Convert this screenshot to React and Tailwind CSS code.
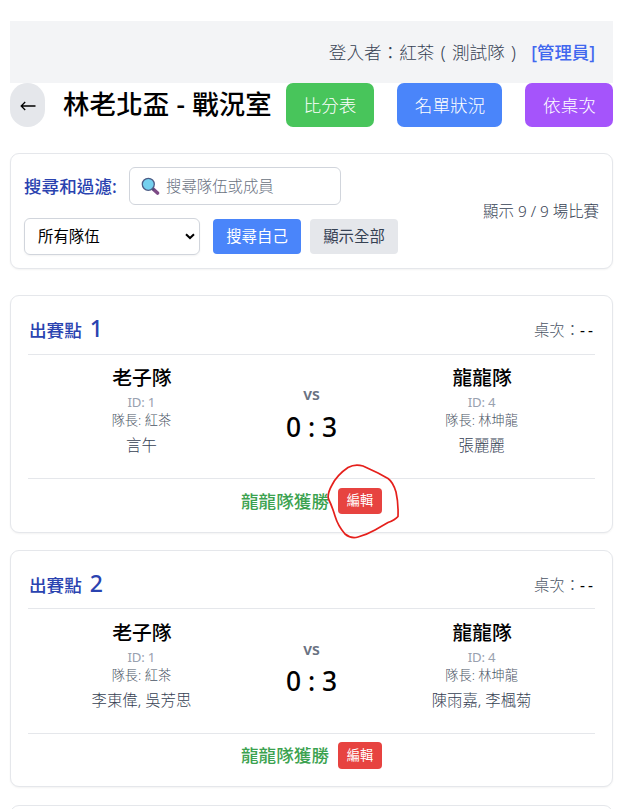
const matches = [
  {
    no: 1,
    a: { name: '老子隊', id: 1, captain: '紅茶', members: '言午' },
    b: { name: '龍龍隊', id: 4, captain: '林坤龍', members: '張麗麗' },
    card: 'h-[238px] mt-[26px]',
    head: 'h-[59px]',
    body: 'h-[124px]',
    teams: 'pt-[9px]',
    versus: 'pt-[27px]',
    score: 'mt-[5px]',
    foot: 'pt-[9px]',
    edit: 'h-[26px]',
    circled: true,
  },
  {
    no: 2,
    a: { name: '老子隊', id: 1, captain: '紅茶', members: '李東偉, 吳芳思' },
    b: { name: '龍龍隊', id: 4, captain: '林坤龍', members: '陳雨嘉, 李楓菊' },
    card: 'h-[237px] mt-[17px]',
    head: 'h-[58px]',
    body: 'h-[125px]',
    teams: 'pt-[10px]',
    versus: 'pt-[28px]',
    score: 'mt-[4px]',
    foot: 'pt-[8px]',
    edit: 'h-[27px]',
  },
];

function Magnifier() {
  return (
    <svg className="h-[19px] w-[19px] shrink-0" viewBox="0 0 19 19">
      <path d="M11.5 11.5 L16.5 16" stroke="#7d4a86" strokeWidth="3.6" strokeLinecap="round" />
      <path d="M10.5 11 L13 13" stroke="#4a4a72" strokeWidth="2.2" />
      <circle cx="7.3" cy="7.3" r="6" fill="#74d0ee" stroke="#4c5c86" strokeWidth="1.3" />
    </svg>
  );
}

function Team({ team, pad }) {
  return (
    <div className={`col-span-2 flex flex-col items-center whitespace-nowrap ${pad}`}>
      <div className="h-7 pl-px text-[19.8px] leading-7 font-medium text-black">{team.name}</div>
      <div className="mt-px h-[18px] text-[13.2px] leading-[18px] tracking-[-0.2px] text-gray-400">ID: {team.id}</div>
      <div className="h-[18px] text-[13.2px] leading-[18px] font-light text-gray-600">隊長: {team.captain}</div>
      <div className="mt-[6px] h-[22px] text-[15.4px] leading-[22px] font-light text-gray-700">{team.members}</div>
    </div>
  );
}

function Circle() {
  return (
    <svg className="pointer-events-none absolute -top-[25px] -left-[13px] h-[78px] w-[76px]" viewBox="325 463 76 78" fill="none">
      <path
        d="M332 485 Q337 475 348 467.500 Q355 463.500 363 466 L378 473 L388 478.500 Q393 482 396 492 Q398.500 503 398 516.500 Q395 520 388 522.500 L375 530 Q366 535 358 537 Q351 539 345 534 Q338 526 335 516 Q332 506 328.500 499 Q327 494 332 485 Z"
        stroke="#e5201c"
        strokeWidth="1.700"
        strokeLinejoin="round"
      />
    </svg>
  );
}

function MatchCard({ m }) {
  return (
    <section className={`shrink-0 rounded-[9px] border border-gray-200 bg-white px-[17px] shadow-xs ${m.card}`}>
      <div className={`flex justify-between border-b border-gray-200 ${m.head}`}>
        <div className="flex items-baseline pt-[16px] pl-[1px] leading-[32px] font-medium text-[#2a43b0]">
          <span className="text-[17.6px]">出賽點</span>
          <span className="ml-[8px] text-[23px]">{m.no}</span>
        </div>
        <div className="flex pt-[24px] text-[15.4px] leading-[22px] font-light text-gray-600">
          桌次：<span className="-mr-[1px] font-normal tracking-[3px] text-black">--</span>
        </div>
      </div>
      <div className={`grid grid-cols-5 border-b border-gray-200 ${m.body}`}>
        <Team team={m.a} pad={m.teams} />
        <div className={`flex flex-col items-center whitespace-nowrap ${m.versus}`}>
          <div className="h-6 text-[16px] leading-6 font-semibold text-gray-500">vs</div>
          <div className={`text-[26.4px] leading-8 font-medium text-black ${m.score}`}>0 : 3</div>
        </div>
        <Team team={m.b} pad={m.teams} />
      </div>
      <div className={`flex justify-center gap-[9px] ${m.foot}`}>
        <span className="text-[17.6px] leading-[27px] font-medium text-[#3ba24f]">龍龍隊獲勝</span>
        <div className="relative">
          <button className={`flex w-[44px] items-center justify-center rounded-[4px] bg-[#e74340] text-[13.2px] leading-none text-white ${m.edit}`}>
            編輯
          </button>
          {m.circled && <Circle />}
        </div>
      </div>
    </section>
  );
}

export default function App() {
  return (
    <main className="flex h-[809px] w-[630px] flex-col overflow-hidden bg-white pt-[21px] pr-[17px] pl-[10px] [font-family:'Noto_Sans','Noto_Sans_CJK_TC',sans-serif]">
      <div className="flex h-[62px] shrink-0 items-center justify-end bg-gray-100 pr-[18px] text-[17.6px] whitespace-nowrap text-gray-700">
        <span className="flex font-light">
          登入者：紅茶
          <span className="w-[17.6px] text-center">(</span>
          測試隊
          <span className="w-[17.6px] text-center">)</span>
        </span>
        <span className="ml-[9px] text-[17.4px] font-medium text-[#4067ef]">[管理員]</span>
      </div>
      <header className="flex h-[44px] shrink-0 items-center whitespace-nowrap">
        <button className="flex h-[44px] w-[35px] items-center justify-center rounded-full bg-gray-200 text-black">
          <svg className="mt-[2px] h-[10px] w-[16px]" viewBox="0 0 16 10" fill="none" stroke="#000" strokeWidth="1.3">
            <path d="M15.500 5 H1.200 M5.200 1 L1.200 5 L5.200 9" />
          </svg>
        </button>
        <h1 className="-mt-[3px] ml-[18px] w-[223px] text-[26.4px] leading-[44px] font-medium tracking-[0.2px] text-black">林老北盃 - 戰況室</h1>
        <button className="h-[44px] w-[88px] rounded-[7px] bg-[#48c55b] text-[17.6px] font-light text-white">比分表</button>
        <button className="ml-[23px] h-[44px] w-[105px] rounded-[7px] bg-[#4a85fa] pl-px text-[17.6px] font-light text-white">名單狀況</button>
        <button className="ml-[23px] h-[44px] w-[88px] rounded-[7px] bg-[#a554fb] pl-px text-[17.6px] font-light text-white">依桌次</button>
      </header>
      <section className="mt-[26px] flex h-[116px] shrink-0 items-center justify-between rounded-[9px] border border-gray-200 bg-white px-[13px] whitespace-nowrap shadow-xs">
        <div className="flex flex-col gap-[13px]">
          <div className="flex h-[38px] items-center">
            <span className="w-[105px] text-[17.6px] font-medium text-[#2a43b0]">搜尋和過濾:</span>
            <div className="flex h-[38px] w-[212px] items-center rounded-[6px] border border-gray-300 pl-[11px]">
              <Magnifier />
              <span className="mt-px ml-[6px] text-[15.4px] font-light text-gray-500">搜尋隊伍或成員</span>
            </div>
          </div>
          <div className="flex h-[37px] items-center">
            <div className="flex h-[37px] w-[176px] items-center justify-between rounded-[6px] border border-gray-300 pr-[4px] pl-[13px] text-[15.4px] text-black shadow-xs">
              <span>所有隊伍</span>
              <svg className="h-[7px] w-[10px]" viewBox="0 0 10 7" fill="none">
                <path d="M1 1.200 L5 5 L9 1.200" stroke="#000" strokeWidth="2" />
              </svg>
            </div>
            <button className="ml-[13px] h-[35px] w-[88px] rounded-[4px] bg-[#4a85fa] text-[15.4px] text-white">搜尋自己</button>
            <button className="ml-[9px] h-[35px] w-[88px] rounded-[4px] bg-gray-200 text-[15.4px] text-gray-700">顯示全部</button>
          </div>
        </div>
        <span className="mt-[2px] text-[15.4px] font-light text-gray-700">顯示 9 / 9 場比賽</span>
      </section>
      {matches.map((m) => (
        <MatchCard key={m.no} m={m} />
      ))}
      <section className="mt-[18px] h-[237px] shrink-0 rounded-[9px] border border-gray-200 bg-white" />
    </main>
  );
}
